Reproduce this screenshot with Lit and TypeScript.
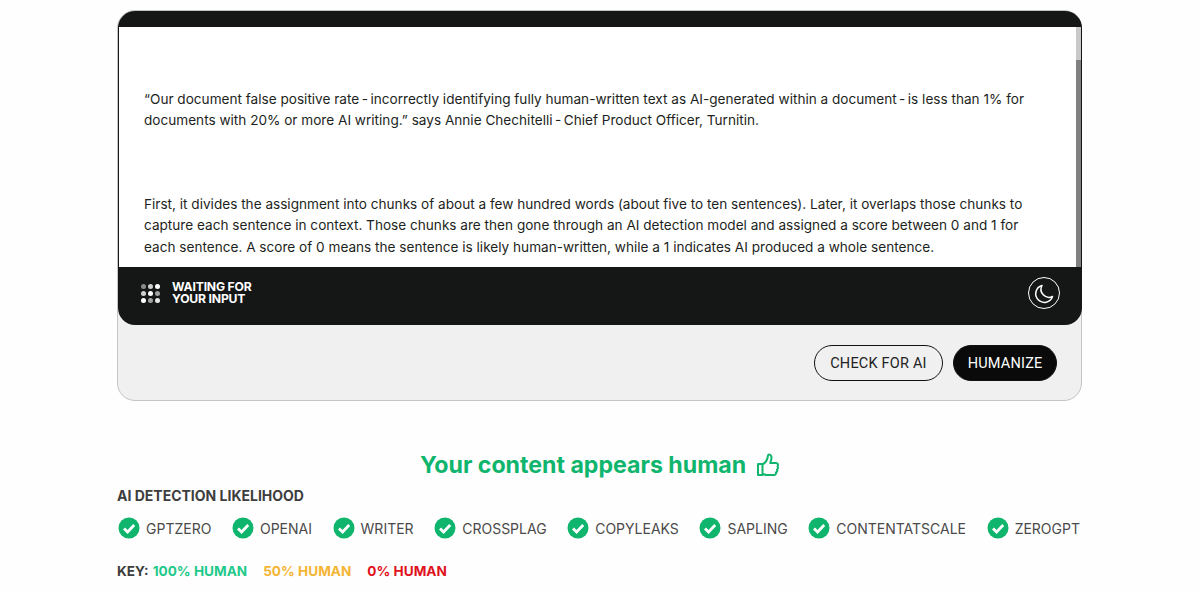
import { html, css, LitElement, svg } from "lit";
import { customElement } from "lit/decorators.js";

const detectors = ["GPTZERO", "OPENAI", "WRITER", "CROSSPLAG", "COPYLEAKS", "SAPLING", "CONTENTATSCALE", "ZEROGPT"];

// opacity of each dot in the 3x3 waiting indicator
const dots = [0.5, 0.8, 1, 0.8, 1, 0.6, 1, 0.6, 0.9];

const checkIcon = svg`
  <circle cx="11" cy="11" r="10.5" fill="#0fb56d"></circle>
  <path d="M6 11.4l3.6 3.6L16.2 8" fill="none" stroke="#fff" stroke-width="2.8"></path>
`;

@customElement("app-root")
export class AppRoot extends LitElement {
  static styles = css`
    :host {
      display: block;
      height: 592px;
      overflow: hidden;
      background: #fefefe;
      font-family: Inter, "Liberation Sans", sans-serif;
    }
    .page {
      width: 965px;
      margin-left: 117px;
      padding-top: 10px;
    }
    .card {
      background: #f0f0f0;
      border: 1px solid #c4c4c4;
      border-radius: 18px;
      height: 391px;
      box-sizing: border-box;
    }
    .editor {
      background: #151616;
      border-radius: 17px;
      margin: 0 -1px 0 0;
      padding-top: 16px;
      height: 314px;
      box-sizing: border-box;
      display: flex;
      flex-direction: column;
    }
    .sheet {
      background: #fff;
      height: 240px;
      margin-left: 1px;
      margin-right: 1px;
      box-sizing: border-box;
      padding: 62px 50px 0 25px;
      position: relative;
      overflow: hidden;
      color: #1d1f21;
      font-size: 13.6px;
      line-height: 21.4px;
    }
    .sheet p {
      margin: 0 0 62px;
    }
    .scrollbar {
      position: absolute;
      top: 0;
      right: 0;
      bottom: 0;
      width: 5px;
      background: #c9c9c9;
    }
    .thumb {
      position: absolute;
      top: 33px;
      bottom: 0;
      left: 0;
      right: 0;
      background: #808080;
    }
    .status {
      flex: 1;
      display: flex;
      align-items: center;
      justify-content: space-between;
      padding: 0 22px 6px 23px;
    }
    .waiting {
      display: flex;
      align-items: center;
      gap: 12px;
      color: #fff;
      font-size: 12.2px;
      font-weight: 700;
      line-height: 12px;
      letter-spacing: -0.2px;
    }
    .dots {
      display: grid;
      grid-template-columns: repeat(3, 5px);
      gap: 2px;
    }
    .dot {
      width: 5px;
      height: 5px;
      border-radius: 50%;
      background: #fff;
    }
    .moon {
      width: 32px;
      height: 32px;
      display: block;
    }
    .actions {
      display: flex;
      justify-content: flex-end;
      gap: 10px;
      padding: 20px 24px 0 0;
    }
    .btn {
      font-family: Roboto, sans-serif;
      font-size: 14.5px;
      height: 36px;
      box-sizing: border-box;
      border-radius: 18px;
      border: 1px solid #111;
      padding: 0 15.5px;
      background: transparent;
      color: #222;
      letter-spacing: 0.2px;
    }
    .btn.dark {
      background: #0a0a0a;
      color: #fff;
      padding: 0 13.5px;
    }
    h2 {
      margin: 47px 0 0;
      display: flex;
      justify-content: center;
      align-items: center;
      gap: 11px;
      color: #0fb56d;
      font-size: 23.15px;
      font-weight: 700;
      line-height: 34px;
    }
    .likelihood {
      margin-top: 5px;
      font-size: 14px;
      font-weight: 700;
      color: #3d3d3d;
      line-height: 18px;
    }
    .detectors {
      display: flex;
      justify-content: space-between;
      margin-top: 12px;
      padding: 0 2px 0 1px;
      color: #4a4a4a;
      font-size: 14px;
    }
    .detector {
      display: flex;
      align-items: center;
      gap: 6px;
    }
    .detector svg {
      width: 22px;
      height: 22px;
    }
    .key {
      display: flex;
      margin-top: 24px;
      font-size: 13.6px;
      font-weight: 700;
      color: #3d3d3d;
    }
    .key span {
      margin-left: 4px;
    }
    .key .amber {
      color: #f5b534;
      margin-left: 16px;
    }
    .key .red {
      color: #e0121c;
      margin-left: 16px;
    }
    .key .green {
      color: #1fc98a;
    }
  `;

  render() {
    return html`
      <div class="page">
        <div class="card">
          <div class="editor">
            <div class="sheet">
              <p>“Our document false positive rate\u2009-\u2009incorrectly identifying fully human-written text as AI-generated within a document\u2009-\u2009is less than 1% for documents with 20% or more AI writing.” says Annie Chechitelli\u2009-\u2009Chief Product Officer, Turnitin.</p>
              <p>First, it divides the assignment into chunks of about a few hundred words (about five to ten sentences). Later, it overlaps those chunks to capture each sentence in context. Those chunks are then gone through an AI detection model and assigned a score between 0 and 1 for each sentence. A score of 0 means the sentence is likely human-written, while a 1 indicates AI produced a whole sentence.</p>
              <div class="scrollbar"><div class="thumb"></div></div>
            </div>
            <div class="status">
              <div class="waiting">
                <div class="dots">
                  ${dots.map((o) => html`<div class="dot" style="opacity:${o}"></div>`)}
                </div>
                <div>WAITING FOR<br />YOUR INPUT</div>
              </div>
              <svg class="moon" viewBox="0 0 32 32" fill="none" stroke="#fff">
                <circle cx="16" cy="16" r="15.5" stroke-width="1"></circle>
                <path d="M14 8.5a8.6 8.6 0 1 0 10.5 11 8 8 0 0 1-10.5-11z" stroke-width="1.5" stroke-linejoin="round"></path>
              </svg>
            </div>
          </div>
          <div class="actions">
            <button class="btn">CHECK FOR AI</button>
            <button class="btn dark">HUMANIZE</button>
          </div>
        </div>
        <h2>
          Your content appears human
          <svg width="22" height="24" viewBox="0 0 22 24" fill="none" stroke="#0fb56d" stroke-width="2" stroke-linejoin="round">
            <path d="M1 11h4.5v11H1z"></path>
            <path d="M5.5 11.5c2.5-1.5 4.5-4 5-6.500.3-1.500.3-3.500 1.500-3.500 2.500 0 3 3 2 6l-.8 2.500H19c2 0 2.500 2 1.500 3.500.8 1 .6 2.500-.5 3.200.5 1.200 0 2.400-1 2.800.3 1.500-.7 2.500-2 2.500H10c-2 0-3-1-4.500-1"></path>
          </svg>
        </h2>
        <div class="likelihood">AI DETECTION LIKELIHOOD</div>
        <div class="detectors">
          ${detectors.map(
            (d) => html`<div class="detector">
              <svg viewBox="0 0 22 22">${checkIcon}</svg>${d}
            </div>`
          )}
        </div>
        <div class="key">
          KEY:
          <span class="green">100% HUMAN</span>
          <span class="amber">50% HUMAN</span>
          <span class="red">0% HUMAN</span>
        </div>
      </div>
    `;
  }
}
